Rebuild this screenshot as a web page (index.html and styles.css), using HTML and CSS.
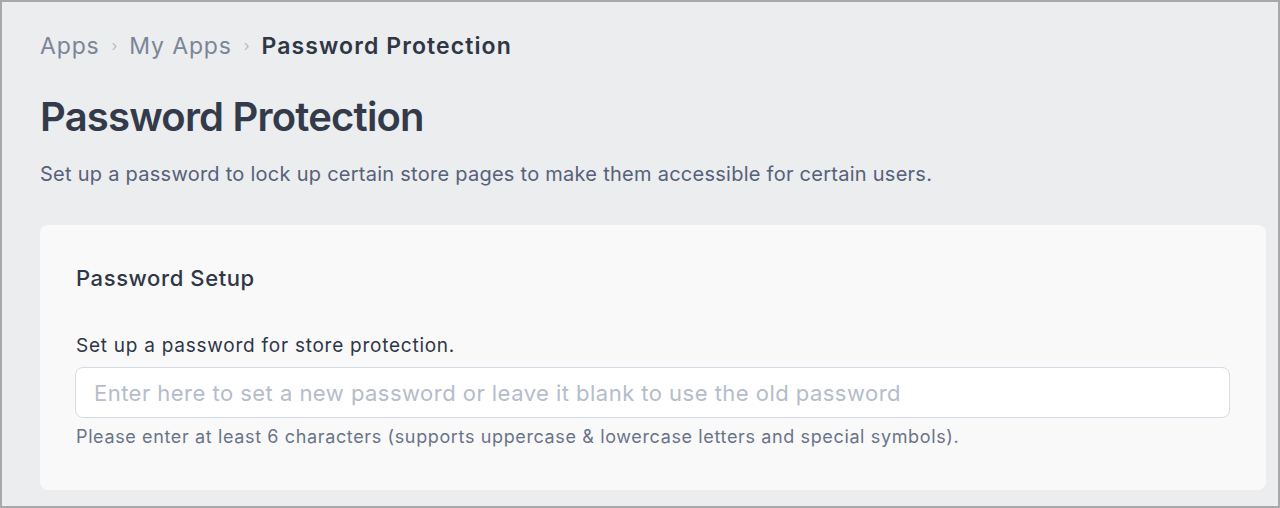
FILE: index.html
```html
<!DOCTYPE html>
<html lang="en">
<head>
<meta charset="utf-8">
<title>Password Protection</title>
<link rel="stylesheet" href="styles.css">
</head>
<body>
<div class="frame">
  <nav class="crumbs">
    <span class="crumb">Apps</span>
    <span class="sep">›</span>
    <span class="crumb">My Apps</span>
    <span class="sep">›</span>
    <span class="crumb current">Password Protection</span>
  </nav>
  <h1 class="title">Password Protection</h1>
  <p class="subtitle">Set up a password to lock up certain store pages to make them accessible for certain users.</p>
  <section class="card">
    <h2 class="card-title">Password Setup</h2>
    <label class="label" for="pw">Set up a password for store protection.</label>
    <input id="pw" class="input" type="text" placeholder="Enter here to set a new password or leave it blank to use the old password">
    <p class="help">Please enter at least 6 characters (supports uppercase &amp; lowercase letters and special symbols).</p>
  </section>
</div>
</body>
</html>
```

FILE: styles.css
```css
html, body { margin: 0; padding: 0; }
body {
  font-family: Inter, "Noto Sans", sans-serif;
  background: #ecedef;
}
.frame {
  box-sizing: border-box;
  height: 508px;
  border: 2px solid #a7a8aa;
  background: #ecedef;
  padding: 29px 12px 0 38px;
}
.crumbs {
  display: flex;
  align-items: center;
  gap: 12px;
  font-size: 23px;
  line-height: 30px;
  letter-spacing: 0.85px;
  color: #7b8597;
}
.sep { font-size: 15px; color: #b7bcc6; letter-spacing: 0; }
.crumb.current { color: #2f3646; font-weight: 600; letter-spacing: 1.1px; }
.title {
  margin: 32px 0 0;
  font-size: 40px;
  line-height: 48px;
  font-weight: 600;
  color: #333a4a;
  letter-spacing: -0.8px;
}
.subtitle {
  margin: 19px 0 0;
  font-size: 20px;
  line-height: 28px;
  letter-spacing: 0.26px;
  color: #55617a;
}
.card {
  margin-top: 37px;
  background: #f9f9fa;
  border-radius: 8px;
  padding: 38px 36px 41px 35px;
}
.card-title {
  margin: 0 0 0 1px;
  font-size: 22px;
  line-height: 30px;
  font-weight: 500;
  letter-spacing: 0.6px;
  color: #2f3646;
}
.label {
  display: block;
  margin: 40px 0 0 1px;
  font-size: 19px;
  line-height: 26px;
  letter-spacing: 0.75px;
  color: #2f3646;
}
.input {
  display: block;
  box-sizing: border-box;
  width: 100%;
  height: 51px;
  margin-top: 8px;
  padding: 0 18px;
  border: 1px solid #d4dce6;
  border-radius: 8px;
  background: #ffffff;
  font-family: inherit;
  font-size: 22px;
  letter-spacing: 0.47px;
  color: #2f3646;
  outline: none;
}
.input::placeholder { color: #b5bccb; }
.help {
  margin: 7px 0 0 1px;
  font-size: 18px;
  line-height: 24px;
  letter-spacing: 0.63px;
  color: #6a7488;
}
```
